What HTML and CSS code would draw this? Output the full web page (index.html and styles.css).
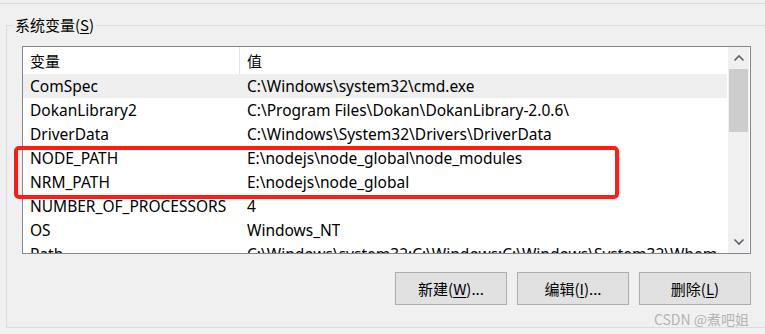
FILE: index.html
```html
<!DOCTYPE html>
<html lang="zh-CN">
<head>
<meta charset="utf-8">
<title>系统变量</title>
<link rel="stylesheet" href="styles.css">
</head>
<body>
<div class="window">
  <div class="topline"></div>
  <fieldset class="group">
    <legend class="group-label">系统变量(<u>S</u>)</legend>
    <div class="listbox">
      <div class="list">
        <div class="row header">
          <div class="c1">变量</div>
          <div class="c2">值</div>
        </div>
        <div class="row hover"><div class="c1">ComSpec</div><div class="c2">C:\Windows\system32\cmd.exe</div></div>
        <div class="row"><div class="c1">DokanLibrary2</div><div class="c2">C:\Program Files\Dokan\DokanLibrary-2.0.6\</div></div>
        <div class="row"><div class="c1">DriverData</div><div class="c2">C:\Windows\System32\Drivers\DriverData</div></div>
        <div class="row"><div class="c1">NODE_PATH</div><div class="c2">E:\nodejs\node_global\node_modules</div></div>
        <div class="row"><div class="c1">NRM_PATH</div><div class="c2">E:\nodejs\node_global</div></div>
        <div class="row"><div class="c1">NUMBER_OF_PROCESSORS</div><div class="c2">4</div></div>
        <div class="row"><div class="c1">OS</div><div class="c2">Windows_NT</div></div>
        <div class="row"><div class="c1">Path</div><div class="c2">C:\Windows\system32;C:\Windows;C:\Windows\System32\Wbem</div></div>
      </div>
      <div class="scrollbar">
        <div class="sb-btn">
          <svg width="12" height="8" viewBox="0 0 12 8"><path d="M1.5 6.5 L6 2 L10.5 6.5" fill="none" stroke="#606060" stroke-width="1.6"/></svg>
        </div>
        <div class="sb-thumb"></div>
        <div class="sb-track"></div>
        <div class="sb-btn">
          <svg width="12" height="8" viewBox="0 0 12 8"><path d="M1.5 1.5 L6 6 L10.5 1.5" fill="none" stroke="#606060" stroke-width="1.6"/></svg>
        </div>
      </div>
    </div>
    <div class="buttons">
      <button class="btn">新建(<u>W</u>)...</button>
      <button class="btn">编辑(<u>I</u>)...</button>
      <button class="btn">删除(<u>L</u>)</button>
    </div>
  </fieldset>
  <div class="highlight"></div>
  <div class="watermark">CSDN @煮吧姐</div>
</div>
</body>
</html>
```
FILE: styles.css
```css
* { box-sizing: border-box; }
html, body {
  margin: 0;
  padding: 0;
  background: #f0f0f0;
  overflow: hidden;
}
body {
  font-family: "Noto Sans", "Noto Sans CJK SC", sans-serif;
  font-size: 15px;
  color: #000;
}
.window {
  position: relative;
  width: 765px;
  height: 334px;
  padding-top: 3px;
}
.topline {
  height: 0;
  border-top: 1px solid #dcdcdc;
}
.group {
  margin: 11px -20px 0 6px;
  padding: 0 35px 0 15px;
  border: 1px solid #dcdcdc;
  height: 313px;
  min-width: 0;
}
.group-label {
  padding: 0 2px;
  margin-left: -9px;
  font-family: "Noto Sans CJK SC", sans-serif;
  font-size: 15px;
  line-height: 20px;
}
.group-label u { text-underline-offset: 2px; }
.listbox {
  margin-top: 11px;
  width: 729px;
  height: 208px;
  border: 1px solid #828790;
  background: #fff;
  display: flex;
  overflow: hidden;
}
.list {
  width: 704px;
  flex: none;
  overflow: hidden;
  font-size: 15.5px;
}
.row {
  display: flex;
  height: 24px;
  align-items: center;
  white-space: nowrap;
}
.row.header {
  height: 27px;
  font-family: "Noto Sans CJK SC", sans-serif;
  font-size: 15px;
}
.row.hover { background: #efefef; }
.c1 {
  width: 217px;
  flex: none;
  padding-left: 7px;
  height: 100%;
  display: flex;
  align-items: center;
}
.header .c1 { border-right: 1px solid #e5e5e5; }
.c2 {
  padding-left: 7px;
  overflow: hidden;
}
.scrollbar {
  margin-left: 1px;
  width: 21px;
  flex: none;
  background: #f0f0f0;
  display: flex;
  flex-direction: column;
}
.sb-btn {
  height: 22px;
  display: flex;
  align-items: center;
  justify-content: center;
  flex: none;
}
.sb-thumb {
  height: 63px;
  margin: 0 1px;
  background: #cdcdcd;
  flex: none;
}
.sb-track { flex: 1; }
.buttons {
  display: flex;
  justify-content: flex-end;
  gap: 10px;
  width: 729px;
  margin-top: 18px;
}
.btn {
  width: 112px;
  height: 33px;
  background: #e1e1e1;
  border: 1px solid #adadad;
  border-radius: 0;
  font-family: "Noto Sans CJK SC", sans-serif;
  font-size: 15px;
  color: #000;
  padding: 0;
}
.btn u { text-underline-offset: 2px; }
.highlight {
  position: absolute;
  left: 14px;
  top: 146px;
  width: 605px;
  height: 53px;
  border: 4px solid #ff1c14;
  border-radius: 5px;
}
.watermark {
  position: absolute;
  right: 16px;
  top: 309px;
  font-family: "Noto Sans CJK SC", sans-serif;
  font-size: 14px;
  line-height: 20px;
  color: #b4b4b4;
}
```
